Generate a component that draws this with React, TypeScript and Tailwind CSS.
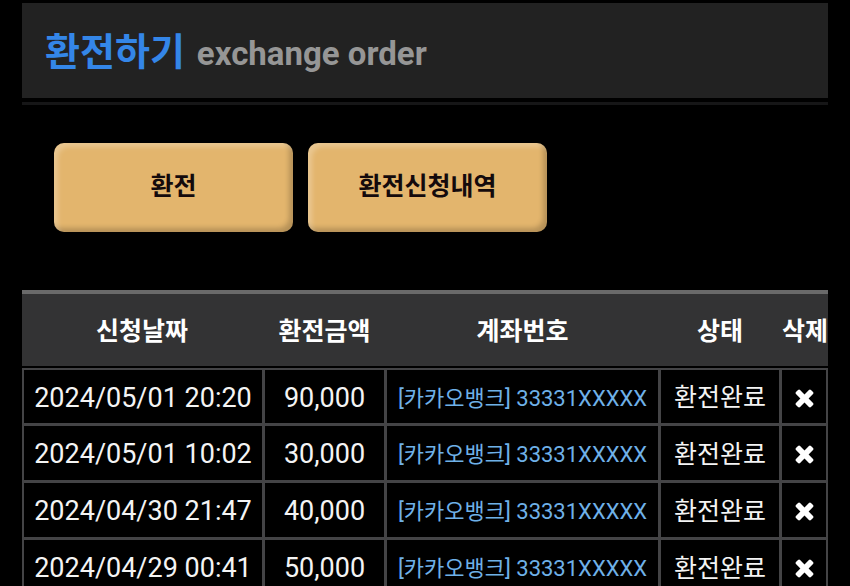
type ExchangeRow = {
  date: string;
  amount: string;
  account: string;
  status: string;
};

const rows: ExchangeRow[] = [
  { date: "2024/05/01 20:20", amount: "90,000", account: "[카카오뱅크] 33331XXXXX", status: "환전완료" },
  { date: "2024/05/01 10:02", amount: "30,000", account: "[카카오뱅크] 33331XXXXX", status: "환전완료" },
  { date: "2024/04/30 21:47", amount: "40,000", account: "[카카오뱅크] 33331XXXXX", status: "환전완료" },
  { date: "2024/04/29 00:41", amount: "50,000", account: "[카카오뱅크] 33331XXXXX", status: "환전완료" },
];

const cell = "border-b-3 border-[#444446] px-0 pt-[3px] pb-0 align-middle";

function TimesIcon() {
  return (
    <svg className="size-[27px]" viewBox="0 64 1792 1792" fill="currentColor" aria-hidden="true">
      <path d="M1490 1322q0 40-28 68l-136 136q-28 28-68 28t-68-28l-294-294-294 294q-28 28-68 28t-68-28l-136-136q-28-28-28-68t28-68l294-294-294-294q-28-28-28-68t28-68l136-136q28-28 68-28t68 28l294 294 294-294q28-28 68-28t68 28l136 136q28 28 28 68t-28 68l-294 294 294 294q28 28 28 68z" />
    </svg>
  );
}

function TabButton({ label }: { label: string }) {
  return (
    <button
      type="button"
      className={[
        "h-[89px] w-[239px] rounded-[10px] bg-[#e3b56d] pb-0.5 text-[25px] font-bold text-[#140a0c]",
        "shadow-[inset_4px_4px_5px_rgba(255,255,255,.25),inset_-4px_-4px_5px_rgba(0,0,0,.2)]",
      ].join(" ")}
    >
      {label}
    </button>
  );
}

export default function App() {
  return (
    <div className="h-screen overflow-hidden bg-black px-[22px] pt-[3px] font-[Roboto,'Noto_Sans_CJK_KR',sans-serif] text-[#f4f4f4]">
      <header className="border-b-3 border-[#161617] pb-1">
        <h1 className="flex h-[95px] items-baseline gap-3 bg-[#222222] pl-[23px] pt-[21px] text-[38px] font-bold text-[#3486e8]">
          환전하기
          <small className="text-[33px] text-[#969696]">exchange order</small>
        </h1>
      </header>

      <div className="flex gap-[15px] px-8 pb-[58px] pt-[38px]">
        <TabButton label="환전" />
        <TabButton label="환전신청내역" />
      </div>

      <table className="w-full table-fixed border-separate border-spacing-0 text-center whitespace-nowrap">
        <colgroup>
          <col className="w-[243px]" />
          <col className="w-[122px]" />
          <col className="w-[274px]" />
          <col className="w-[121px]" />
          <col className="w-[46px]" />
        </colgroup>
        <thead>
          <tr className="h-[78px] text-[25px] text-white">
            {["신청날짜", "환전금액", "계좌번호", "상태", "삭제"].map((h) => (
              <th
                key={h}
                scope="col"
                className="border-t-4 border-b-2 border-t-[#6a6a6a] border-b-black bg-[#333334] pl-0 pr-[3px] pt-[3px] pb-0 font-bold"
              >
                {h}
              </th>
            ))}
          </tr>
        </thead>
        <tbody>
          {rows.map((row, i) => {
            const top = i === 0 ? "border-t-2" : "";
            return (
              <tr key={row.date} className={i === 0 ? "h-[58px]" : "h-[57px]"}>
                <td className={`${cell} ${top} border-l-2 border-r-3 text-[27px]`}>{row.date}</td>
                <td className={`${cell} ${top} border-r-3 text-[27px]`}>{row.amount}</td>
                <td className={`${cell} ${top} border-r-3 text-[22px] text-[#6fb1e8]`}>{row.account}</td>
                <td className={`${cell} ${top} border-r-3 text-[25px]`}>{row.status}</td>
                <td className={`${cell} ${top} border-r-2`}>
                  <button type="button" aria-label="삭제" className="mx-auto block text-white">
                    <TimesIcon />
                  </button>
                </td>
              </tr>
            );
          })}
        </tbody>
      </table>
    </div>
  );
}
